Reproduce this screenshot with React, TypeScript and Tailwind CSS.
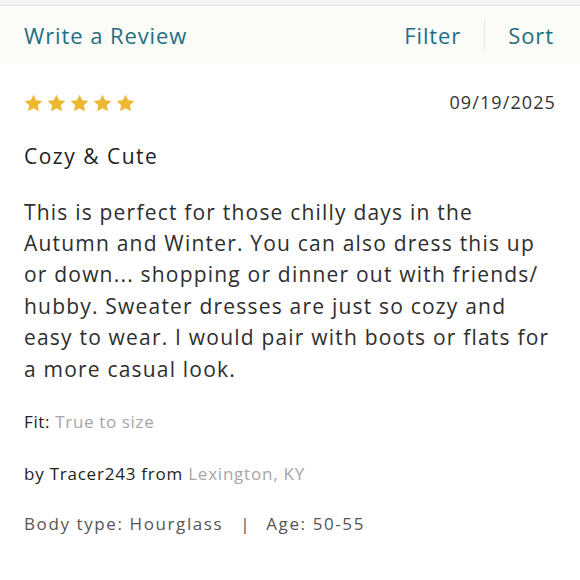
import React from "react";

const Star = () => (
  <svg width="19" height="18" viewBox="0 0 24 23" className="block">
    <path
      d="M12 0.8l3.4 7.3 7.9 0.9-5.9 5.4 1.6 7.8L12 18.2l-7 4 1.6-7.8L0.7 9l7.9-0.9z"
      fill="#eeb730"
    />
  </svg>
);

const lines = [
  "This is perfect for those chilly days in the",
  "Autumn and Winter. You can also dress this up",
  "or down... shopping or dinner out with friends/",
  "hubby. Sweater dresses are just so cozy and",
  "easy to wear. I would pair with boots or flats for",
  "a more casual look.",
];

export default function App() {
  return (
    <div
      className="w-[580px] h-[580px] bg-white text-[#262626] overflow-hidden"
      style={{ fontFamily: "'Open Sans', 'Noto Sans', sans-serif" }}
    >
      <div className="h-[6px] bg-[#f4f4f2] border-b border-[#e2e2df]" />
      <div className="h-[58px] bg-[#fbfbf8] flex items-center px-6 text-[22px] text-[#1f6f82] tracking-[0.9px]">
        <span className="flex-1">Write a Review</span>
        <span>Filter</span>
        <span className="w-px h-[30px] bg-[#e6e6e3] mx-[23px]" />
        <span className="pr-[2px]">Sort</span>
      </div>
      <div className="px-6">
        <div className="flex items-center justify-between mt-[25px]">
          <div className="flex gap-[4px]">
            <Star />
            <Star />
            <Star />
            <Star />
            <Star />
          </div>
          <span className="text-[18px] text-[#333] tracking-[1.1px]">09/19/2025</span>
        </div>
        <div className="mt-[25px] text-[21px] font-medium text-[#222] tracking-[1.5px]">Cozy &amp; Cute</div>
        <p className="mt-[24px] text-[21px] leading-[31.4px] text-[#2e2e2e] tracking-[1.2px] whitespace-nowrap">
          {lines.map((l, i) => (
            <React.Fragment key={i}>
              {l}
              {i < lines.length - 1 && <br />}
            </React.Fragment>
          ))}
        </p>
        <div className="mt-[24px] text-[17px] text-[#222] tracking-[0.65px]">
          Fit: <span className="text-[#a6a6a6]">True to size</span>
        </div>
        <div className="mt-[27px] text-[17px] text-[#222] tracking-[0.77px]">
          by Tracer243 from <span className="text-[#a6a6a6]">Lexington, KY</span>
        </div>
        <div className="mt-[24px] text-[17px] text-[#555] tracking-[1.6px] flex">
          <span>Body type: Hourglass</span>
          <span className="ml-[17px] mr-[15px]">|</span>
          <span>Age: 50-55</span>
        </div>
      </div>
    </div>
  );
}
